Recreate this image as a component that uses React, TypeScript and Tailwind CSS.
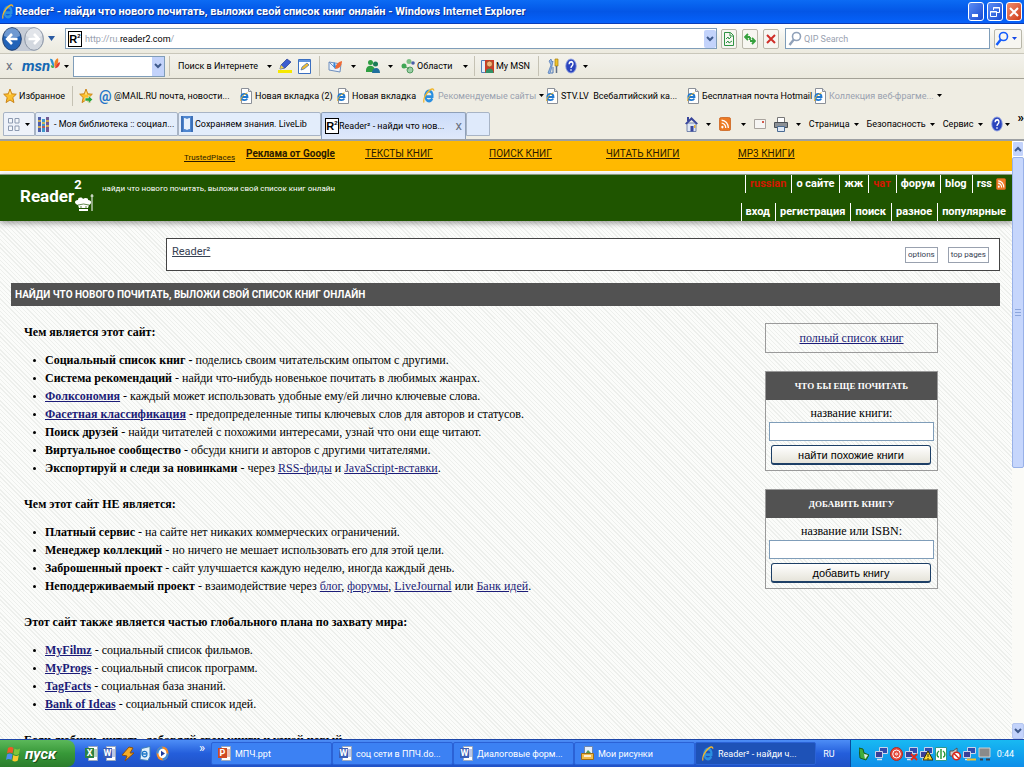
import type { ReactNode } from 'react';
import clsx from 'clsx';

type IconProps = { className?: string };

const IeIcon = ({ className = 'size-4' }: IconProps) => (
  <svg viewBox="0 0 16 16" preserveAspectRatio="none" className={clsx('shrink-0', className)} aria-hidden="true">
    <path
      d="M3 8.6h9.6c.3-3.400-1.700-5.600-4.600-5.600S3.100 5.200 3.100 8s2 5 4.900 5c2 0 3.500-.9 4.300-2.600"
      fill="none"
      stroke="#2a8fe0"
      strokeWidth="2.800"
    />
    <path d="M1.500 14.500C-.5 11.500 4 5 9 2.200c3-1.700 5.500-1.500 5.500.5" fill="none" stroke="#f0b62c" strokeWidth="1.600" />
  </svg>
);

const PageIcon = () => (
  <svg viewBox="0 0 12 16" className="h-4 w-3 shrink-0" aria-hidden="true">
    <path d="M1.500.5h7l3 3v12h-10z" fill="#fff" stroke="#8b9098" />
    <path d="M8.500.5v3h3" fill="#dde3ea" stroke="#8b9098" />
    <path d="M1.500 9h6c0-2-1-3.200-3-3.200S1.300 7.200 1.300 9s1.200 3.200 3.200 3.200c1.300 0 2.300-.6 2.800-1.600" fill="none" stroke="#1f78cf" strokeWidth="1.800" />
    <path d="M.6 13C0 11 3 6.500 7.500 4.800" fill="none" stroke="#e9b12a" />
  </svg>
);

const ReaderIcon = () => (
  <span className="flex h-4 w-3.5 shrink-0 justify-center border border-black bg-white font-['Liberation_Sans',sans-serif] text-[11px] leading-[15px] font-bold text-black">
    R<span className="text-[6px] leading-2">2</span>
  </span>
);

const Caret = ({ className = 'h-[3px] w-[5px] text-black' }: IconProps) => (
  <svg viewBox="0 0 5 3" preserveAspectRatio="none" className={clsx('shrink-0', className)} aria-hidden="true">
    <path d="M0 0h5L2.500 3z" fill="currentColor" />
  </svg>
);

const Chevron = () => (
  <svg viewBox="0 0 8 6" className="h-1.5 w-2" fill="none" stroke="#3f5a8c" strokeWidth="2" aria-hidden="true">
    <path d="m1 1 3 3 3-3" />
  </svg>
);

const StarIcon = ({ add = false }: { add?: boolean }) => (
  <svg viewBox="0 0 16 16" className="h-4 w-3.5 shrink-0" preserveAspectRatio="none" aria-hidden="true">
    <path d="m8 1 2 4.800 5.200.4-4 3.400 1.300 5L8 12l-4.500 2.600 1.300-5-4-3.400L6 5.800z" fill="#fcc02d" stroke="#c87f12" />
    <path d="m8 3 1 3.500H7z" fill="#fff0a8" />
    {add && <path d="M7 10h4V7.500l4.500 4-4.500 4V13H7z" fill="#2fa53a" stroke="#fff" strokeWidth=".5" />}
  </svg>
);

const HelpIcon = () => (
  <svg viewBox="0 0 16 16" className="h-4 w-3 shrink-0" preserveAspectRatio="none" aria-hidden="true">
    <circle cx="8" cy="8" r="7" fill="#2a44bd" stroke="#8e9fe0" />
    <path d="M5.500 6.200C5.500 3 10.600 3 10.600 6c0 2-2.600 1.800-2.600 4m0 1.200v1.600" fill="none" stroke="#fff" strokeWidth="1.800" />
  </svg>
);

const RssIcon = ({ className = 'size-4' }: IconProps) => (
  <svg viewBox="0 0 16 16" preserveAspectRatio="none" className={clsx('shrink-0', className)} aria-hidden="true">
    <rect x=".5" y=".5" width="15" height="15" rx="2.500" fill="#ec7a24" stroke="#c9601b" />
    <circle cx="4.500" cy="11.500" r="1.500" fill="#fff" />
    <path d="M3.500 7a5.500 5.500 0 0 1 5.500 5.500M3.500 3.700a9 9 0 0 1 9 9" fill="none" stroke="#fff" strokeWidth="1.700" />
  </svg>
);

const MagnifierIcon = ({ className = 'text-slate-400' }: IconProps) => (
  <svg viewBox="0 0 14 16" className={clsx('h-4 w-3.5 shrink-0', className)} fill="none" stroke="currentColor" aria-hidden="true">
    <circle cx="8.500" cy="5.500" r="4" strokeWidth="1.600" />
    <path d="M5.800 8.600 1.500 14" strokeWidth="2.400" />
  </svg>
);

const NavArrow = ({ back = false }: { back?: boolean }) => (
  <svg viewBox="0 0 20 24" className="h-6 w-5" aria-hidden="true">
    <ellipse cx="10" cy="12" rx="9.300" ry="11.300" fill={back ? '#2263b8' : '#d3d8df'} stroke={back ? '#23416f' : '#8d97a6'} />
    <path d="M2 9a8 8 0 0 1 16 0q-8 4-16 0" fill="#fff" opacity=".35" />
    {back ? (
      <path d="M15.500 12H5.500m4.500-5-4.800 5 4.800 5" fill="none" stroke="#fff" strokeWidth="2.600" />
    ) : (
      <path d="M4.500 12h10M10 7l4.800 5-4.800 5" fill="none" stroke="#fff" strokeWidth="2.600" />
    )}
  </svg>
);

const MsnButterfly = () => (
  <svg viewBox="0 0 12 14" className="h-3.5 w-2.5 shrink-0 self-start" aria-hidden="true">
    <path d="M5 12C3 9 1 5 0 1c3-1 5 3 5 11" fill="#2b8fd4" />
    <path d="M5.500 11C4.500 6 6 1 9.500 0 11 4 8.500 8 5.500 11" fill="#f08222" />
    <path d="M6 12c1-3 3-7 6-7 0 3-2 7-6 7" fill="#e33b2e" />
    <path d="M1 9c1-1 3 0 4 2-2 2-4 0-4-2" fill="#4fb14a" />
  </svg>
);

const HighlighterIcon = () => (
  <svg viewBox="0 0 14 16" className="h-4 w-3.5 shrink-0" aria-hidden="true">
    <path d="M0 12h14v3H0z" fill="#f6e800" />
    <path d="m2 11 1-4 6-6 4 3-6 6z" fill="#3c5ccf" stroke="#223a91" strokeWidth=".7" />
    <path d="m2 11 1-4 3 3z" fill="#f2d34b" />
  </svg>
);

const FormIcon = () => (
  <svg viewBox="0 0 13 15" className="h-[15px] w-[13px] shrink-0" aria-hidden="true">
    <path d="M.5.5h12v14H.5z" fill="#fff" stroke="#3b6fc0" />
    <path d="M1 1h11v2H1z" fill="#5f93dd" />
    <path d="m3 11 1-3 5-4 2 2-5 4z" fill="#f1bd31" stroke="#416fb1" strokeWidth=".7" />
  </svg>
);

const MailIcon = () => (
  <svg viewBox="0 0 15 14" className="h-3.5 w-[15px] shrink-0" aria-hidden="true">
    <path d="m1 3 12 2-1 8-11-2z" fill="#e9f1fb" stroke="#6f8fbe" />
    <path d="m1 3 5 5 7-3" fill="none" stroke="#6f8fbe" />
    <path d="M7 10c0-4 3-7 7-8 0 5-3 8-7 8" fill="#ef6a35" />
    <path d="M7 10C5 8 5 5 6 3c2 2 2 4 1 7" fill="#3a88d8" />
  </svg>
);

const PeopleIcon = () => (
  <svg viewBox="0 0 14 14" className="size-3.5 shrink-0" aria-hidden="true">
    <circle cx="4.500" cy="3.500" r="2.500" fill="#2f9e42" />
    <circle cx="9.500" cy="5" r="2.500" fill="#1a7c56" />
    <path d="M0 11c0-5 8-6 9 0v2H0z" fill="#2f9e42" />
    <path d="M6 14c0-6 8-7 8 0z" fill="#1f6f9c" />
  </svg>
);

const AreasIcon = () => (
  <svg viewBox="0 0 14 16" className="h-4 w-3.5 shrink-0" aria-hidden="true">
    <circle cx="3" cy="8" r="2.500" fill="#3fa654" />
    <circle cx="8" cy="3.500" r="2.500" fill="#7cbf85" />
    <circle cx="12" cy="5" r="1.800" fill="#4a5fa8" />
    <circle cx="9" cy="12" r="3" fill="#9ccfa6" stroke="#4f9b5d" />
    <path d="M5 9l3 2" stroke="#4f9b5d" />
  </svg>
);

const MyMsnIcon = () => (
  <svg viewBox="0 0 13 16" className="h-4 w-[13px] shrink-0" aria-hidden="true">
    <path d="M.5 2.500h5v12h-5z" fill="#e4effb" stroke="#5580b8" />
    <path d="M4 2h9v13H4z" fill="#cd3b28" />
    <circle cx="8.500" cy="6" r="3" fill="#f3b37c" stroke="#8d4a1c" strokeWidth=".8" />
    <path d="M4.500 15c0-6 8-6 8 0z" fill="#2f9167" />
  </svg>
);

const ToolsIcon = () => (
  <svg viewBox="0 0 12 16" className="h-4 w-3 shrink-0" aria-hidden="true">
    <path d="m1 15 3-8-2-4 2-2 1 3 1-1-1 5-2 8z" fill="#8fb3e6" stroke="#4e76b3" strokeWidth=".7" />
    <path d="M6 9v6l-2 0" stroke="#4e76b3" fill="none" />
    <path d="M8 1h3v7H8z" fill="#f0c22c" stroke="#a57e10" strokeWidth=".7" />
    <path d="M9.500 8v7" stroke="#5d6e86" strokeWidth="1.500" />
  </svg>
);

const HomeIcon = () => (
  <svg viewBox="0 0 13 16" className="h-4 w-[13px]" aria-hidden="true">
    <path d="M2 7h9v8.500H2z" fill="#dfe7f3" stroke="#5b6f9e" strokeWidth=".8" />
    <path d="M0 7.500 6.500 1 13 7.500l-1.500 1-5-4.500-5 4.500z" fill="#39469b" />
    <path d="M2 1h2v4H2zM5.500 10h3v5.500h-3z" fill="#39469b" />
    <path d="M9 9h1.500v3H9z" fill="#e8b53a" />
  </svg>
);

const LetterIcon = () => (
  <svg viewBox="0 0 12 11" className="h-[11px] w-3" aria-hidden="true">
    <path d="M.5.5h11v9H.5z" fill="#f6f5f3" stroke="#a9a49e" />
    <path d="M8 2h2v2H8z" fill="#d25b4c" />
  </svg>
);

const PrinterIcon = () => (
  <svg viewBox="0 0 14 15" className="h-[15px] w-3.5" aria-hidden="true">
    <path d="M3.500.5h7v5h-7z" fill="#fff" stroke="#777" />
    <path d="M.5 5.500h13v5H.5z" fill="#8c9196" stroke="#4c5156" />
    <path d="M3.500 9.500h7v5h-7z" fill="#dfe9f5" stroke="#4a6b93" />
  </svg>
);

const BooksIcon = () => (
  <svg viewBox="0 0 12 15" className="h-[15px] w-3 shrink-0" aria-hidden="true">
    <path d="M0 0h3v15H0z" fill="#4e5da8" />
    <path d="M4 2h3v13H4z" fill="#3f97c9" />
    <path d="M8 0h3v15H8z" fill="#735a91" />
    <path d="M0 4h3M4 6h3M8 4h3M0 10h3M8 9h3" stroke="#f4c438" strokeWidth="1.500" />
    <path d="M4 10h3" stroke="#d94838" strokeWidth="1.500" />
  </svg>
);

const LiveLibIcon = () => (
  <svg viewBox="0 0 12 16" className="h-4 w-3 shrink-0" aria-hidden="true">
    <path d="M0 0h12v16H0z" fill="#4f86cf" />
    <path d="M3 2c1 0 2 .5 3 1 1-.5 2-1 3-1v11c-1 0-2 .3-3 1-1-.7-2-1-3-1z" fill="#e8f1fc" />
    <path d="M1 0v16M11 0v16" stroke="#2c5a9f" />
  </svg>
);

const GridIcon = () => (
  <svg viewBox="0 0 12 13" className="h-[13px] w-3" fill="#f4f7fb" stroke="#8d9ab0" aria-hidden="true">
    <path d="M.5.5h4v4.500h-4zM7 .5h4v4.500H7zM.5 8h4v4.500h-4zM7 8h4v4.500H7z" />
  </svg>
);

const CupIcon = () => (
  <svg viewBox="0 0 20 20" className="h-5 w-5" fill="#fff" aria-hidden="true">
    <path d="M4 12c-4-1-4-5 0-5 0-3 4-3 5-1 2-2 6-1 5 1 4 0 4 4 1 5l-1 3H5zM5 16h9v2H5z" />
    <path d="M18 1v17M16.500 3h3" stroke="#fff" />
    <path d="M4 12q5.500-2 11 0M7 13v2M12 13v2" stroke="#1f5500" strokeWidth=".7" fill="none" />
  </svg>
);

const WindowsFlag = () => (
  <svg viewBox="0 0 15 16" className="h-4 w-[15px]" aria-hidden="true">
    <path d="M2 2q3-2 5.500 0L6.500 7.500q-3-2-5.500 0z" fill="#ee5a27" />
    <path d="M8.500 2.500q3 2 5.500 0l-1 5.500q-3 2-5.500 0z" fill="#7fc63c" />
    <path d="M1 8.500q3-2 5.500 0L5.500 14q-3-2-5.500 0z" fill="#4c8df2" />
    <path d="M7.300 9q3 2 5.500 0l-1 5.500q-3 2-5.500 0z" fill="#fbc92e" />
  </svg>
);

const OfficeIcon = ({ letter, color }: { letter: string; color: string }) => (
  <svg viewBox="0 0 13 15" className="h-[15px] w-[13px] shrink-0" aria-hidden="true">
    <path d="M3.500.5h9v14h-9z" fill="#fff" stroke="#9aa7bd" />
    <path d="M9 4h3M9 6h3M9 8h3M9 10h3" stroke={color} strokeWidth=".7" />
    <path d="M0 2h9v10H0z" fill={color} />
    <text x="4.500" y="10" fontSize="9" fontWeight="bold" textAnchor="middle" fill="#fff">
      {letter}
    </text>
  </svg>
);

const FolderIcon = () => (
  <svg viewBox="0 0 13 15" className="h-[15px] w-[13px] shrink-0" aria-hidden="true">
    <path d="M3.500.5h8v9h-8z" fill="#e5effc" stroke="#6f86ac" />
    <path d="m4 8 3-4 4 4z" fill="#4f9a57" />
    <path d="M.5 7.500h12v6H.5z" fill="#f1ba48" stroke="#9d6d16" />
    <path d="M3 10h7" stroke="#fff" strokeWidth="1.500" />
  </svg>
);

const BoltIcon = () => (
  <svg viewBox="0 0 13 16" className="h-4 w-[13px]" aria-hidden="true">
    <path d="m8 1 4 1-3 5h4l-9 8 2-5-5-1z" fill="#f7ac25" stroke="#8d4f0d" />
  </svg>
);

const NotesIcon = () => (
  <svg viewBox="0 0 12 15" className="h-[15px] w-3" aria-hidden="true">
    <path d="M2.500 2.500 11 .5v10l-2 4-8-1z" fill="#dff0fb" stroke="#3f7fb7" />
    <path d="M3 8h5c0-4-5-3-5 0s4 4 5 1" fill="none" stroke="#1c77c8" strokeWidth="1.300" />
  </svg>
);

const PlayerIcon = () => (
  <svg viewBox="0 0 13 15" className="h-[15px] w-[13px]" aria-hidden="true">
    <ellipse cx="6.500" cy="7.500" rx="6" ry="7" fill="#f28c28" />
    <path d="M6.500.5c-3.300 0-6 3.100-6 7h6zM6.500 14.500c3.300 0 6-3.100 6-7h-6z" fill="#3e8bd9" />
    <ellipse cx="6.500" cy="7.500" rx="4" ry="4.700" fill="#fff" />
    <path d="m5 4.800 4 2.700-4 2.700z" fill="#1d3a9c" />
  </svg>
);

const MonitorIcon = ({ badge }: { badge?: ReactNode }) => (
  <svg viewBox="0 0 13 15" className="h-[15px] w-[13px] shrink-0" aria-hidden="true">
    <path d="M4.500 1.500h8v6h-8z" fill="#2f4cae" stroke="#c9d4ea" />
    <path d="M.5 5.500h7v6h-7z" fill="#3a3f97" stroke="#c9d4ea" />
    <path d="M2 13.500h5" stroke="#dbe3f2" strokeWidth="1.500" />
    {badge}
  </svg>
);

const Divider = () => <span className="block h-5 w-px shrink-0 bg-[#c5c2b4]" />;

const TitleBar = () => (
  <header className="flex h-6 shrink-0 items-center border-b border-[#0a3bb5] bg-linear-to-b from-[#0c6bf4] via-[#0456e6] to-[#0562fb] pr-0.5 pl-0.5 text-white">
    <IeIcon className="h-4 w-3" />
    <h1 className="ml-px flex-1 truncate text-[11px] font-bold [text-shadow:1px_1px_#0a318f]">
      Reader² - найди что нового почитать, выложи свой список книг онлайн - Windows Internet Explorer
    </h1>
    <div className="flex gap-[3px]">
      <button aria-label="Свернуть" className="flex h-[19px] w-4 items-end rounded-[3px] border border-white bg-linear-to-br from-[#5b8cf5] to-[#1c4ad0] p-[3px]">
        <span className="h-[3px] w-1.5 bg-white" />
      </button>
      <button aria-label="Восстановить" className="flex h-[19px] w-4 items-center justify-center rounded-[3px] border border-white bg-linear-to-br from-[#5b8cf5] to-[#1c4ad0]">
        <svg viewBox="0 0 10 12" className="h-3 w-2.5" fill="none" stroke="#fff" aria-hidden="true">
          <path d="M3.500 4V1.500h6v5H7M3 2h7" />
          <path d="M.5 5.500h6v5h-6zM0 6h7" />
        </svg>
      </button>
      <button aria-label="Закрыть" className="flex h-[19px] w-4 items-center justify-center rounded-[3px] border border-white bg-linear-to-br from-[#ee8b6b] to-[#cf3a12]">
        <svg viewBox="0 0 10 10" className="size-2.5" stroke="#fff" strokeWidth="2" aria-hidden="true">
          <path d="m1 1 8 8M9 1 1 9" />
        </svg>
      </button>
    </div>
  </header>
);

const squareButton = 'flex h-5 w-4 items-center justify-center rounded-xs border border-[#b9b7aa] bg-[#f7f6f1]';

const AddressBar = () => (
  <div className="flex h-[30px] shrink-0 items-center border-b border-[#c9c7ba] bg-linear-to-b from-white via-[#f2f1ea] to-[#eceadf] px-0.5">
    <nav className="flex rounded-full bg-[#c6ccd6]">
      <button aria-label="Назад">
        <NavArrow back />
      </button>
      <button aria-label="Вперед" className="ml-0.5">
        <NavArrow />
      </button>
    </nav>
    <button aria-label="Последние страницы" className="mr-2.5 ml-1">
      <Caret className="h-[5px] w-[7px] text-[#2a5aa2]" />
    </button>
    <div className="flex h-[21px] flex-1 items-center border border-[#7f9db9] bg-white pl-0.5">
      <ReaderIcon />
      <p className="flex-1 pl-[3px] text-gray-400">
        http://ru.<span className="text-black">reader2.com</span>/
      </p>
      <button aria-label="Адреса" className="flex h-[18px] w-3 items-center justify-center rounded-xs bg-[#c3d3fb]">
        <Chevron />
      </button>
    </div>
    <div className="mx-1 flex gap-[5px]">
      <button aria-label="Режим совместимости" className={squareButton}>
        <svg viewBox="0 0 10 14" className="h-3.5 w-2.5" fill="none" stroke="#2f9343" aria-hidden="true">
          <path d="M.5.5h6l3 3v10h-9zM6 1v3h3M2 7l2-2 1 2 2-2M2 11l2-2 1 2 3-2" />
        </svg>
      </button>
      <button aria-label="Обновить" className={squareButton}>
        <svg viewBox="0 0 12 12" className="size-3" fill="none" stroke="#35a03d" strokeWidth="1.800" aria-hidden="true">
          <path d="M6 4H1.500M4 1 1 4l3 3M6 4v3M6 8h4.500M8 5l3 3-3 3" />
        </svg>
      </button>
      <button aria-label="Остановить" className={squareButton}>
        <svg viewBox="0 0 10 10" className="size-2.5" stroke="#cf2d27" strokeWidth="2" aria-hidden="true">
          <path d="m1 1 8 8M9 1 1 9" />
        </svg>
      </button>
    </div>
    <label className="ml-0.5 flex h-[21px] w-[205px] items-center border border-[#7f9db9] bg-white pl-0.5">
      <MagnifierIcon />
      <input aria-label="Поиск" placeholder="QIP Search" className="w-full pl-0.5 outline-none placeholder:text-gray-400" />
    </label>
    <div className="ml-1 flex h-5 w-7 items-center justify-between rounded-xs border border-[#b9b7aa] bg-[#f7f6f1] pr-1">
      <button aria-label="Найти">
        <MagnifierIcon className="text-blue-600" />
      </button>
      <Caret className="h-[3px] w-[5px] text-blue-700" />
    </div>
  </div>
);

const MsnBar = () => (
  <div className="flex h-[25px] shrink-0 items-center border-b border-[#a3a196] bg-linear-to-b from-[#f3f2ec] to-[#ebe9dd] pl-1.5 whitespace-nowrap">
    <button aria-label="Закрыть панель" className="w-4 text-left text-[13px] text-gray-500">
      x
    </button>
    <div className="flex w-[42px] items-center">
      <span className="text-[15px] leading-[18px] font-bold text-[#1568b3] italic">msn</span>
      <MsnButterfly />
    </div>
    <span className="mr-1">
      <Caret />
    </span>
    <div className="flex h-[21px] w-[92px] justify-end border border-[#7f9db9] bg-white">
      <button aria-label="Список" className="flex w-3 items-center justify-center bg-[#c3d3fb]">
        <Chevron />
      </button>
    </div>
    <div className="ml-1 flex items-center">
      <Divider />
      <button className="ml-2 w-[89px] text-left">Поиск в Интернете</button>
      <Caret />
      <span className="ml-1.5 flex items-center gap-1.5">
        <HighlighterIcon />
        <FormIcon />
      </span>
      <span className="mx-2">
        <Divider />
      </span>
      <span className="flex items-center gap-2">
        <MailIcon />
        <Caret />
      </span>
      <span className="ml-2.5 flex items-center gap-2">
        <PeopleIcon />
        <Caret />
      </span>
      <button className="mx-2 flex w-[54px] items-center gap-0.5">
        <AreasIcon /> Области
      </button>
      <Caret />
      <span className="mx-1.5">
        <Divider />
      </span>
      <button className="flex items-center gap-0.5">
        <MyMsnIcon /> My MSN
      </button>
      <span className="mx-2">
        <Divider />
      </span>
      <span className="flex items-center gap-1.5">
        <ToolsIcon />
        <HelpIcon />
        <Caret />
      </span>
    </div>
  </div>
);

const favourites = [
  { label: '@MAIL.RU почта, новости...', width: 'w-[141px]', icon: <span className="w-3 text-[14px] leading-3 font-bold text-[#2474c8]">@</span> },
  { label: 'Новая вкладка (2)', width: 'w-[97px]', icon: <PageIcon /> },
  { label: 'Новая вкладка', width: 'w-[86px]', icon: <PageIcon /> },
  { label: 'Рекомендуемые сайты', width: 'w-[123px]', icon: <IeIcon className="h-4 w-3" />, muted: true, menu: true },
  { label: 'STV.LV  Всебалтийский ка...', width: 'w-[141px]', icon: <PageIcon /> },
  { label: 'Бесплатная почта Hotmail', width: 'w-[127px]', icon: <PageIcon /> },
  { label: 'Коллекция веб-фрагме...', width: 'w-[134px]', icon: <PageIcon />, muted: true, menu: true },
];

const FavouritesBar = () => (
  <div className="flex h-[33px] shrink-0 items-center bg-[#efede3] pl-[3px]">
    <button className="flex w-[69px] items-center gap-0.5">
      <StarIcon /> Избранное
    </button>
    <Divider />
    <span className="mx-1.5">
      <StarIcon add />
    </span>
    {favourites.map((item) => (
      <a key={item.label} href="#" className={clsx('flex shrink-0 items-center gap-[3px] whitespace-pre', item.width, item.muted && 'text-gray-400')}>
        {item.icon}
        <span className="flex-1">{item.label}</span>
        {item.menu && <Caret className="mr-2 h-[3px] w-[5px] text-black" />}
      </a>
    ))}
  </div>
);

const MenuButton = ({ children }: { children: ReactNode }) => (
  <button className="flex items-center gap-1">
    {children}
    <Caret />
  </button>
);

const TabBar = () => (
  <div className="flex h-[29px] shrink-0 items-start border-b-2 border-[#9da0a3] bg-[#efede3] pl-[3px] whitespace-nowrap">
    <div className="flex h-6 w-8 items-center justify-between rounded-t-xs border border-[#a8b4c5] bg-[#eef2f9] px-1">
      <GridIcon />
      <Caret />
    </div>
    <div role="tablist" className="flex">
      <button role="tab" className="flex h-6 w-[143px] items-center gap-1 overflow-hidden rounded-t-xs border border-[#a8b4c5] bg-[#e3edfb] px-0.5">
        <BooksIcon /> - Моя библиотека :: социал...
      </button>
      <button role="tab" className="flex h-6 w-[143px] items-center gap-0.5 overflow-hidden rounded-t-xs border border-[#a8b4c5] bg-[#e3edfb] px-0.5">
        <LiveLibIcon /> Сохраняем знания. LiveLib
      </button>
      <button role="tab" aria-selected="true" className="flex h-[27px] w-[145px] items-center rounded-t-xs border border-b-0 border-[#8fa0b8] bg-linear-to-b from-[#cbdcf9] to-[#dfe9fb] px-[3px]">
        <ReaderIcon />
        <span className="flex-1 text-left">Reader² - найди что нов...</span>
        <span className="text-[13px] text-gray-500">x</span>
      </button>
      <button role="tab" aria-label="Новая вкладка" className="h-6 w-6 rounded-t-xs border border-[#a8b4c5] bg-[#dfeafb]" />
    </div>
    <div className="flex h-6 flex-1 items-center justify-end gap-2">
      <span className="flex items-center gap-2"><HomeIcon /><Caret /></span>
      <span className="flex items-center gap-2.5"><RssIcon className="h-3.5 w-3" /><Caret /></span>
      <LetterIcon />
      <span className="flex items-center gap-2"><PrinterIcon /><Caret /></span>
      <MenuButton>Страница</MenuButton>
      <MenuButton>Безопасность</MenuButton>
      <MenuButton>Сервис</MenuButton>
      <span className="flex items-center gap-0.5"><HelpIcon /><Caret /></span>
      <span className="self-start text-[13px] leading-3 font-bold">»</span>
    </div>
  </div>
);

const AdStrip = () => (
  <div className="flex h-[30px] items-start bg-[#ffb900] pt-[5px] pl-[184px] text-[10px] leading-4 whitespace-nowrap text-[#2b1a00] underline">
    <a href="#" className="w-[62px] pt-1 text-[8px] leading-4">TrustedPlaces</a>
    <a href="#" className="w-[119px] font-bold">Реклама от Google</a>
    <a href="#" className="w-[124px]">ТЕКСТЫ КНИГ</a>
    <a href="#" className="w-[117px]">ПОИСК КНИГ</a>
    <a href="#" className="w-[132px]">ЧИТАТЬ КНИГИ</a>
    <a href="#">MP3 КНИГИ</a>
  </div>
);

const topLinks = [
  { label: 'russian', active: true },
  { label: 'о сайте' },
  { label: 'жж' },
  { label: 'чат', active: true },
  { label: 'форум' },
  { label: 'blog' },
];
const bottomLinks = ['вход', 'регистрация', 'поиск', 'разное', 'популярные'];

const SiteHeader = () => (
  <div className="relative flex h-[47px] justify-between border-t border-[#8a9a80] bg-[#1f5500] text-white shadow-[0_2px_6px_#0006]">
    <div className="flex pl-5">
      <a href="#" className="flex w-[82px]">
        <span className="pt-[3px] text-[17px] leading-9 font-bold">Reader</span>
        <span className="flex flex-col">
          <span className="pt-0.5 text-[13px] leading-4 font-bold">2</span>
          <CupIcon />
        </span>
      </a>
      <p className="pt-1.5 text-[8px] leading-4">найди что нового почитать, выложи свой список книг онлайн</p>
    </div>
    <nav className="flex flex-col justify-between pr-1.5 text-[11px] leading-[18px] font-bold">
      <ul className="flex justify-end">
        {topLinks.map((link) => (
          <li key={link.label} className="mr-[5px] border-l border-white pl-1">
            <a href="#" className={clsx(link.active && 'text-[#d01800]')}>{link.label}</a>
          </li>
        ))}
        <li className="flex items-center gap-1 border-l border-white pl-1">
          <a href="#">rss</a>
          <RssIcon className="h-3 w-2.5" />
        </li>
      </ul>
      <ul className="flex justify-end gap-[5px]">
        {bottomLinks.map((label) => (
          <li key={label} className="border-l border-white pl-1">
            <a href="#">{label}</a>
          </li>
        ))}
      </ul>
    </nav>
  </div>
);

const Link = ({ children }: { children: ReactNode }) => (
  <a href="#" className="text-[#1c1c78] underline">{children}</a>
);

const sections: { title: string; items: ReactNode[] }[] = [
  {
    title: 'Чем является этот сайт:',
    items: [
      <><b>Социальный список книг -</b> поделись своим читательским опытом с другими.</>,
      <><b>Система рекомендаций</b> - найди что-нибудь новенькое почитать в любимых жанрах.</>,
      <><b><Link>Фолксономия</Link></b> - каждый может использовать удобные ему/ей лично ключевые слова.</>,
      <><b><Link>Фасетная классификация</Link></b> - предопределенные типы ключевых слов для авторов и статусов.</>,
      <><b>Поиск друзей</b> - найди читателей с похожими интересами, узнай что они еще читают.</>,
      <><b>Виртуальное сообщество</b> - обсуди книги и авторов с другими читателями.</>,
      <><b>Экспортируй и следи за новинками</b> - через <Link>RSS-фиды</Link> и <Link>JavaScript-вставки</Link>.</>,
    ],
  },
  {
    title: 'Чем этот сайт НЕ является:',
    items: [
      <><b>Платный сервис</b> - на сайте нет никаких коммерческих ограничений.</>,
      <><b>Менеджер коллекций</b> - но ничего не мешает использовать его для этой цели.</>,
      <><b>Заброшенный проект</b> - сайт улучшается каждую неделю, иногда каждый день.</>,
      <><b>Неподдерживаемый проект</b> - взаимодействие через <Link>блог</Link>, <Link>форумы</Link>, <Link>LiveJournal</Link> или <Link>Банк идей</Link>.</>,
    ],
  },
  {
    title: 'Этот сайт также является частью глобального плана по захвату мира:',
    items: [
      <><b><Link>MyFilmz</Link></b> - социальный список фильмов.</>,
      <><b><Link>MyProgs</Link></b> - социальный список программ.</>,
      <><b><Link>TagFacts</Link></b> - социальная база знаний.</>,
      <><b><Link>Bank of Ideas</Link></b> - социальный список идей.</>,
    ],
  },
];

const Article = () => (
  <article className="flex flex-1 flex-col gap-[18px] font-['Liberation_Serif',serif] text-[12px] leading-[18px]">
    {sections.map((section) => (
      <section key={section.title}>
        <h3 className="mb-2.5 font-bold">{section.title}</h3>
        <ul>
          {section.items.map((item, index) => (
            <li key={index} className="flex items-center gap-[9px] pl-[9px]">
              <span className="size-[3px] rounded-full bg-black" />
              <p>{item}</p>
            </li>
          ))}
        </ul>
      </section>
    ))}
    <h3 className="font-bold">Если любишь читать, добавляй свои книги и узнай новый</h3>
  </article>
);

type SearchBoxProps = { title: string; label: string; action: string; id: string };

const SearchBox = ({ title, label, action, id }: SearchBoxProps) => (
  <form className="border border-[#9a9a9a] text-center">
    <h4 className="bg-[#525252] text-[9px] leading-7 font-bold text-white">{title}</h4>
    <div className="px-[3px] pt-1 pb-[5px]">
      <label htmlFor={id} className="block leading-[18px]">{label}</label>
      <input id={id} className="block h-[19px] w-full border border-[#7f9db9] bg-white px-1" />
      <button type="button" className="mx-0.5 mt-1 block h-5 w-[160px] rounded-[3px] border border-b-2 border-[#1d3f66] bg-linear-to-b from-white to-[#e6e4da] font-['Liberation_Sans',sans-serif] text-[11px] leading-4">
        {action}
      </button>
    </div>
  </form>
);

const Sidebar = () => (
  <aside className="flex w-[173px] flex-col gap-[18px] font-['Liberation_Serif',serif] text-[12px]">
    <div className="flex h-[30px] items-center justify-center border border-[#9a9a9a]">
      <Link>полный список книг</Link>
    </div>
    <SearchBox id="similar" title="ЧТО БЫ ЕЩЕ ПОЧИТАТЬ" label="название книги:" action="найти похожие книги" />
    <SearchBox id="add" title="ДОБАВИТЬ КНИГУ" label="название или ISBN:" action="добавить книгу" />
  </aside>
);

const Scrollbar = () => (
  <div className="flex w-3 shrink-0 flex-col items-stretch bg-[#fbfbf7]">
    <button aria-label="Вверх" className="flex h-4 rotate-180 items-center justify-center rounded-xs border border-white bg-[#c3d3fb]">
      <Chevron />
    </button>
    <div className="flex h-[311px] flex-col items-center justify-center gap-0.5 rounded-xs border border-[#98b1e8] bg-[#c6d6fc]">
      <span className="h-px w-1.5 bg-[#8ca6dc]" />
      <span className="h-px w-1.5 bg-[#8ca6dc]" />
      <span className="h-px w-1.5 bg-[#8ca6dc]" />
    </div>
    <button aria-label="Вниз" className="mt-auto flex h-4 items-center justify-center rounded-xs border border-[#b5c6ee] bg-[#c3d3fb]">
      <Chevron />
    </button>
  </div>
);

const taskButton = 'flex w-[121px] items-center gap-1 overflow-hidden rounded-xs border border-[#2b62d6] pl-1.5 text-left whitespace-nowrap';

const Taskbar = () => (
  <footer className="flex h-7 shrink-0 items-stretch border-t border-[#1d46a8] bg-linear-to-b from-[#4d8df6] via-[#245edb] to-[#1f52c6] text-white">
    <button className="flex w-[75px] items-center gap-1 rounded-r-lg bg-linear-to-b from-[#5bb85a] via-[#379838] to-[#2b7d2c] pl-1.5 text-[15px] font-bold italic [text-shadow:1px_1px_#1b4d1c]">
      <WindowsFlag /> пуск
    </button>
    <div className="flex w-[136px] items-center gap-[5px] pl-2.5">
      <OfficeIcon letter="X" color="#2c8143" />
      <OfficeIcon letter="W" color="#3a5fb8" />
      <BoltIcon />
      <NotesIcon />
      <PlayerIcon />
      <span className="ml-auto self-start pr-1.5 text-[13px] leading-4">»</span>
    </div>
    <div className="flex py-0.5">
      <button className={clsx(taskButton, 'bg-[#3c81f3]')}><OfficeIcon letter="P" color="#cf4a24" /> МПЧ.ppt</button>
      <button className={clsx(taskButton, 'bg-[#3c81f3]')}><OfficeIcon letter="W" color="#3a5fb8" /> соц сети в ППЧ.do...</button>
      <button className={clsx(taskButton, 'bg-[#3c81f3]')}><OfficeIcon letter="W" color="#3a5fb8" /> Диалоговые форм...</button>
      <button className={clsx(taskButton, 'bg-[#3c81f3]')}><FolderIcon /> Мои рисунки</button>
      <button className={clsx(taskButton, 'bg-[#1e52b7]')}><IeIcon className="h-4 w-3" /> Reader² - найди ч...</button>
    </div>
    <span className="flex flex-1 items-center justify-center pr-2">RU</span>
    <div className="flex w-[174px] items-center gap-0.5 border-l border-[#0a4a9c] bg-linear-to-b from-[#19b9f2] to-[#0f8ee9] pl-2">
      <svg viewBox="0 0 10 14" className="mr-1 h-3.5 w-2.5" aria-hidden="true">
        <path d="m0 1 4 1 1 4 5 2-3 5-6-2z" fill="#3fae3c" stroke="#1a5e20" />
        <path d="m5 7 4 1-3 4z" fill="#e6e6e6" />
      </svg>
      <MonitorIcon />
      <svg viewBox="0 0 13 14" className="h-3.5 w-[13px]" fill="#e64a3c" stroke="#fff" aria-hidden="true">
        <ellipse cx="6.500" cy="7" rx="6" ry="6.500" stroke="#b22a20" />
        <ellipse cx="6.500" cy="7" rx="3.800" ry="4" />
        <ellipse cx="6.500" cy="7" rx="1" ry="1" />
      </svg>
      <MonitorIcon badge={<path d="m6 8 6 6m0-6-6 6" stroke="#e02a1b" strokeWidth="2" />} />
      <MonitorIcon badge={<path d="m8 5 5 9H3zM8 8v3M8 12v1.500" fill="#fcd92f" stroke="#332c00" />} />
      <svg viewBox="0 0 12 14" className="h-3.5 w-3" aria-hidden="true">
        <path d="M.5.5h11v13H.5z" fill="#fff" stroke="#2b9a8c" />
        <path d="M6 2v10M4 4C1 6 2 10 4 10M8 4c3 2 2 6 0 6" fill="none" stroke="#2b9a3c" strokeWidth="1.500" />
      </svg>
      <svg viewBox="0 0 12 14" className="h-3.5 w-3" aria-hidden="true">
        <path d="M1 4h3l4-3v11L4 9H1z" fill="#c9c9c9" stroke="#555" />
        <circle cx="7.500" cy="9" r="3.800" fill="#fff" stroke="#d6281c" strokeWidth="1.500" />
        <path d="m5 6.500 5 5" stroke="#d6281c" strokeWidth="1.500" />
      </svg>
      <MonitorIcon badge={<path d="M4 13.500h9" stroke="#f1c32e" strokeWidth="2" />} />
      <svg viewBox="0 0 13 14" className="h-3.5 w-[13px]" aria-hidden="true">
        <path d="M1 1h11v9H1z" fill="#8a8a8a" stroke="#cfcfcf" />
        <path d="M2 12.500h3M8 12.500h4" stroke="#39414f" strokeWidth="2" />
      </svg>
      <time className="ml-auto pr-2.5">0:44</time>
    </div>
  </footer>
);

export default function App() {
  return (
    <div className="flex h-screen flex-col overflow-hidden bg-white font-['Roboto',sans-serif] text-[9px] leading-4 text-black">
      <TitleBar />
      <AddressBar />
      <MsnBar />
      <FavouritesBar />
      <TabBar />
      <div className="flex min-h-0 flex-1">
        <main className="min-w-0 flex-1 overflow-hidden bg-[repeating-linear-gradient(45deg,#fbfcfa_0,#fbfcfa_2px,#edefec_2px,#edefec_3px)]">
          <AdStrip />
          <div className="h-[3px] bg-white" />
          <SiteHeader />
          <div className="mt-[17px] mr-3 ml-[166px] flex h-[33px] items-center justify-between border border-[#444] bg-white pr-2.5 pl-[5px]">
            <a href="#" className="self-start pt-1 text-[11px] leading-[18px] text-gray-700 underline">Reader²</a>
            <div className="flex gap-2.5 text-[8px] text-gray-700">
              <button className="border border-gray-400 px-0.5 leading-[14px]">options</button>
              <button className="border border-gray-400 px-0.5 leading-[14px]">top pages</button>
            </div>
          </div>
          <h2 className="mt-3 mr-3 ml-[11px] bg-[#525252] pl-1 text-[10px] leading-[23px] font-bold text-white">
            НАЙДИ ЧТО НОВОГО ПОЧИТАТЬ, ВЫЛОЖИ СВОЙ СПИСОК КНИГ ОНЛАЙН
          </h2>
          <div className="mt-[17px] mr-[74px] ml-6 flex items-start">
            <Article />
            <Sidebar />
          </div>
        </main>
        <Scrollbar />
      </div>
      <Taskbar />
    </div>
  );
}
